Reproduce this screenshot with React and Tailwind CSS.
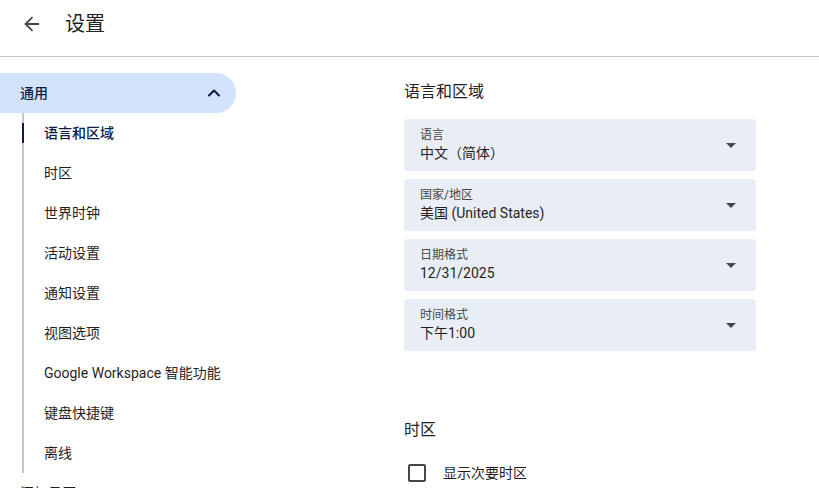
import { ArrowLeft, ChevronUp } from "lucide-react";

const FONT = {
  fontFamily: '"Roboto", "Noto Sans CJK SC", "Noto Sans", sans-serif',
};

const subItems = [
  "语言和区域",
  "时区",
  "世界时钟",
  "活动设置",
  "通知设置",
  "视图选项",
  "Google Workspace 智能功能",
  "键盘快捷键",
  "离线",
];

const selects = [
  { label: "语言", value: "中文（简体）" },
  { label: "国家/地区", value: "美国 (United States)" },
  { label: "日期格式", value: "12/31/2025" },
  { label: "时间格式", value: "下午1:00" },
];

// Dropdown arrow.
function Caret() {
  return (
    <svg width="10" height="5" viewBox="0 0 10 5" className="shrink-0">
      <path d="M0 0h10L5 5z" fill="#444746" />
    </svg>
  );
}

function App() {
  return (
    <div
      className="h-[488px] w-[819px] overflow-hidden bg-white text-[#1f1f1f]"
      style={FONT}
    >
      {/* Header */}
      <header className="flex h-[57px] items-center border-b border-[#c7c7c7] pb-[9px]">
        <button className="ml-[20px] flex h-6 w-6 items-center justify-center text-[#444746]">
          <ArrowLeft size={22} strokeWidth={2} />
        </button>
        <h1 className="ml-[21px] text-[20px] leading-6">设置</h1>
      </header>

      <div className="flex">
        {/* Sidebar */}
        <nav className="w-[236px] shrink-0 pt-4">
          <div className="flex h-10 items-center justify-between rounded-r-full bg-[#d3e3fd] pl-5 pr-[12px] text-[#0b1c4a]">
            <span className="text-sm font-medium">通用</span>
            <ChevronUp size={20} strokeWidth={2.5} />
          </div>

          {/* Sub-items */}
          <div className="my-[10px] ml-[22px] border-l-2 border-[#c4c7c5]">
            <ul className="-my-[10px]">
              {subItems.map((item, i) => (
                <li
                  key={item}
                  className={`relative flex h-10 items-center pl-5 text-sm ${
                    i === 0 ? "font-medium text-[#0b1c4a]" : ""
                  }`}
                >
                  {i === 0 && (
                    <span className="absolute -left-[2px] top-[10px] h-5 w-[2px] bg-[#0b1c4a]" />
                  )}
                  {item}
                </li>
              ))}
            </ul>
          </div>

          <div className="flex h-10 items-center pl-5 text-sm">添加日历</div>
        </nav>

        {/* Main */}
        <main className="ml-[168px] w-[352px] pt-6">
          <h2 className="mb-4 text-base leading-[22px]">语言和区域</h2>

          <div className="flex flex-col gap-2">
            {selects.map((s) => (
              <div
                key={s.label}
                className="flex h-[52px] items-center justify-between rounded-[4px] bg-[#e9eef6] pl-4 pr-5"
              >
                <div className="flex flex-col self-start pt-2">
                  <span className="text-xs leading-4 text-[#444746]">
                    {s.label}
                  </span>
                  <span className="text-sm leading-5">{s.value}</span>
                </div>
                <Caret />
              </div>
            ))}
          </div>

          <h2 className="mt-[68px] text-base leading-[22px]">时区</h2>

          <label className="mt-[22px] flex items-center">
            <span className="ml-1 h-[18px] w-[18px] rounded-[2px] border-2 border-[#444746]" />
            <span className="ml-[17px] text-sm leading-5">显示次要时区</span>
          </label>
        </main>
      </div>
    </div>
  );
}

export default App;
